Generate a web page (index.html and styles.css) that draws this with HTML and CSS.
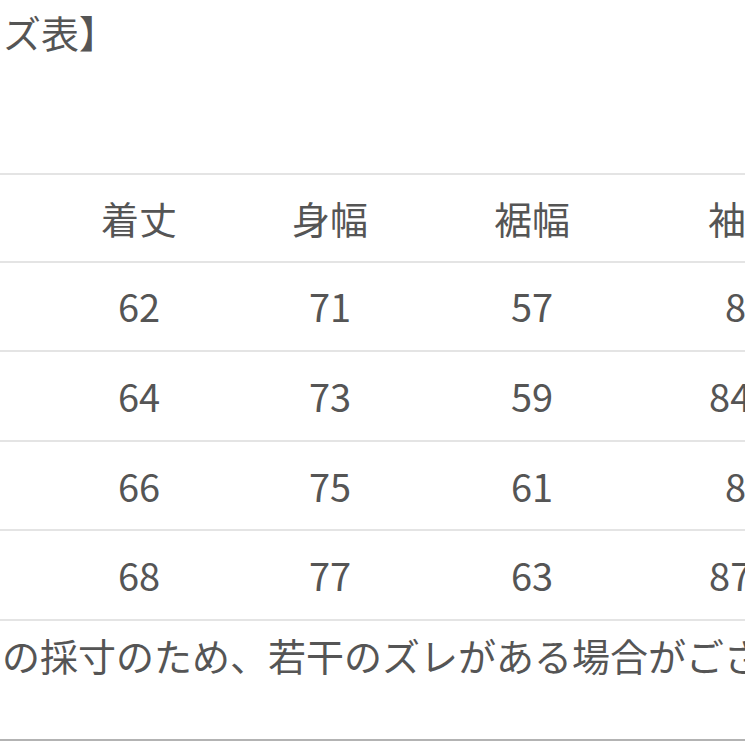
FILE: index.html
```html
<!DOCTYPE html>
<html lang="ja">
<head>
<meta charset="utf-8">
<title>サイズ表</title>
<link rel="stylesheet" href="styles.css">
</head>
<body>
<div class="page">
  <h2 class="heading">ズ表】</h2>
  <div class="size-table">
    <div class="row head">
      <div class="cell spacer"></div>
      <div class="cell">着丈</div>
      <div class="cell">身幅</div>
      <div class="cell">裾幅</div>
      <div class="cell">袖丈</div>
    </div>
    <div class="row">
      <div class="cell spacer"></div>
      <div class="cell">62</div>
      <div class="cell">71</div>
      <div class="cell">57</div>
      <div class="cell">83</div>
    </div>
    <div class="row">
      <div class="cell spacer"></div>
      <div class="cell">64</div>
      <div class="cell">73</div>
      <div class="cell">59</div>
      <div class="cell">84.5</div>
    </div>
    <div class="row">
      <div class="cell spacer"></div>
      <div class="cell">66</div>
      <div class="cell">75</div>
      <div class="cell">61</div>
      <div class="cell">86</div>
    </div>
    <div class="row">
      <div class="cell spacer"></div>
      <div class="cell">68</div>
      <div class="cell">77</div>
      <div class="cell">63</div>
      <div class="cell">87.5</div>
    </div>
  </div>
  <p class="note">の採寸のため、若干のズレがある場合がございます。</p>
</div>
</body>
</html>
```

FILE: styles.css
```css
html, body {
  margin: 0;
  padding: 0;
  background: #ffffff;
  overflow: hidden;
}

.page {
  width: 745px;
  height: 745px;
  overflow: hidden;
  font-family: "Noto Sans CJK JP", "Noto Sans", sans-serif;
  color: #555555;
  font-size: 38px;
  font-weight: 400;
}

.heading {
  margin: 0;
  padding-left: 3px;
  height: 64px;
  line-height: 64px;
  font-size: 38px;
  font-weight: 400;
  white-space: nowrap;
}

.size-table {
  margin-top: 109px;
  border-top: 2px solid #e4e4e4;
  width: 854px;
}

.row {
  display: grid;
  grid-template-columns: 44px 190px 192px 212px 216px;
  height: 89.6px;
  box-sizing: border-box;
  border-bottom: 2px solid #e4e4e4;
  align-items: center;
}

.row.head {
  height: 87.6px;
}

.cell {
  text-align: center;
  white-space: nowrap;
  line-height: 1;
}

.note {
  margin: 0;
  padding-left: 2px;
  height: 120px;
  line-height: 68px;
  box-sizing: border-box;
  border-bottom: 2px solid #b3b3b3;
  white-space: nowrap;
}
```
